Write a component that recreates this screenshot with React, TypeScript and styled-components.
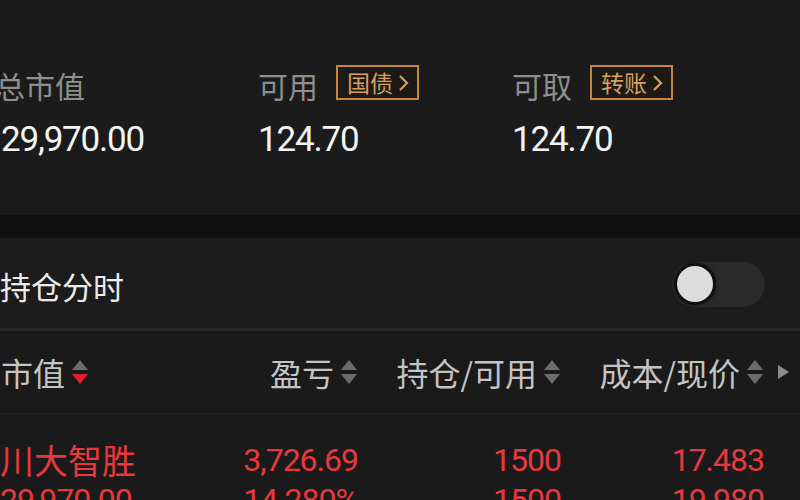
import { FunctionComponent } from 'react';
import styled, { createGlobalStyle } from 'styled-components';

const GlobalStyle = createGlobalStyle`
  html, body {
    margin: 0;
    padding: 0;
    background: #1b1b1b;
  }
  body {
    width: 800px;
    height: 500px;
    overflow: hidden;
    font-family: Roboto, "Noto Sans CJK SC", sans-serif;
  }
`;

const RED = '#e8383d';

type SortState = 'none' | 'desc';

const SortIcon: FunctionComponent<{ state?: SortState }> = ({ state = 'none' }) => (
  <svg width="18" height="28" viewBox="0 0 18 28">
    <polygon points="1,12 9,2 17,12" fill="#6c6c6c" />
    <polygon points="1,16 17,16 9,26" fill={state === 'desc' ? '#e0202a' : '#6c6c6c'} />
  </svg>
);

const Chevron = () => (
  <svg width="11" height="18" viewBox="0 0 11 18">
    <polyline points="2,2 9,9 2,16" fill="none" stroke="#d7a05d" strokeWidth="2.2" strokeLinejoin="miter" />
  </svg>
);

const PlayArrow = () => (
  <svg width="13" height="16" viewBox="0 0 13 16">
    <polygon points="1,1 12,8 1,15" fill="#8a8a8a" />
  </svg>
);

const App: FunctionComponent = () => {
  const summary = [
    { label: '总市值', value: '29,970.00', bleed: true },
    { label: '可用', value: '124.70', action: '国债' },
    { label: '可取', value: '124.70', action: '转账' },
  ];

  const headers = [
    { title: '市值', sort: 'desc' as SortState },
    { title: '盈亏' },
    { title: '持仓/可用' },
    { title: '成本/现价' },
  ];

  const position = {
    lines: [
      ['川大智胜', '3,726.69', '1500', '17.483'],
      ['29,970.00', '14.280%', '1500', '19.980'],
    ],
  };

  return (
    <>
      <GlobalStyle />
      <Page>
        <Summary>
          {summary.map((item) => (
            <SummaryColumn key={item.label}>
              <LabelRow>
                <Label $bleed={item.bleed}>{item.label}</Label>
                {item.action && (
                  <Badge>
                    {item.action}
                    <Chevron />
                  </Badge>
                )}
              </LabelRow>
              <Value>{item.value}</Value>
            </SummaryColumn>
          ))}
        </Summary>

        <Band />

        <ToggleRow>
          <ToggleTitle>持仓分时</ToggleTitle>
          <Track>
            <Knob />
          </Track>
        </ToggleRow>

        <ThickDivider />

        <HeaderRow>
          {headers.map((h, i) => (
            <HeaderCell key={h.title} $align={i === 0 ? 'start' : 'end'}>
              <HeaderText>{h.title}</HeaderText>
              <SortIcon state={h.sort} />
            </HeaderCell>
          ))}
          <ArrowCell>
            <PlayArrow />
          </ArrowCell>
        </HeaderRow>

        <ThinDivider />

        <PositionBlock>
          {position.lines.map((line, li) => (
            <PositionLine key={li}>
              {line.map((cell, ci) => (
                <Cell key={ci} $align={ci === 0 ? 'start' : 'end'} $cjk={li === 0 && ci === 0}>
                  {cell}
                </Cell>
              ))}
              <span />
            </PositionLine>
          ))}
        </PositionBlock>
      </Page>
    </>
  );
};

export default App;

const Page = styled.div`
  width: 800px;
  height: 500px;
  overflow: hidden;
  background: #1b1b1b;
`;

const Summary = styled.div`
  height: 215px;
  box-sizing: border-box;
  padding-top: 65px;
  padding-left: 1px;
  display: grid;
  grid-template-columns: 257px 254px 1fr;
  align-items: start;
`;

const SummaryColumn = styled.div`
  display: flex;
  flex-direction: column;
  gap: 20px;
`;

const LabelRow = styled.div`
  height: 35px;
  display: flex;
  align-items: center;
  gap: 18px;
`;

const Label = styled.span<{ $bleed?: boolean }>`
  font-family: "Noto Sans CJK SC", sans-serif;
  font-size: 30px;
  color: #8e8e8e;
  line-height: 1;
  margin-left: ${(p) => (p.$bleed ? '-6px' : '0')};
  margin-top: 4px;
`;

const Badge = styled.span`
  height: 35px;
  box-sizing: border-box;
  display: inline-flex;
  align-items: center;
  gap: 5px;
  padding: 0 8px 0 9px;
  border: 2px solid #c7843c;
  background: #1d1a16;
  color: #d7a05d;
  font-family: "Noto Sans CJK SC", sans-serif;
  font-size: 23px;
  line-height: 1;
`;

const Value = styled.div`
  font-family: Roboto, sans-serif;
  font-size: 35px;
  letter-spacing: -1.2px;
  line-height: 40px;
  color: #f4f4f4;
`;

const Band = styled.div`
  height: 23px;
  background: #0f1211;
`;

const ToggleRow = styled.div`
  height: 90px;
  display: flex;
  align-items: center;
  justify-content: space-between;
  padding-right: 35px;
  background: #1c1c1c;
`;

const ToggleTitle = styled.span`
  font-family: "Noto Sans CJK SC", sans-serif;
  font-size: 31px;
  color: #ececec;
  margin-top: 5px;
`;

const Track = styled.div`
  width: 93px;
  height: 45px;
  border-radius: 23px;
  background: #2a2a2a;
  display: flex;
  align-items: center;
  margin-top: 2px;
`;

const Knob = styled.div`
  width: 36px;
  height: 36px;
  border-radius: 50%;
  background: #dcdcdc;
  border: 3px solid #101010;
  margin-left: 2px;
  box-shadow: 0 0 3px rgba(0, 0, 0, 0.6);
`;

const ThickDivider = styled.div`
  height: 3px;
  background: #282828;
`;

const columns = '168px 190px 203px 203px 1fr';

const HeaderRow = styled.div`
  height: 82px;
  display: grid;
  grid-template-columns: ${columns};
  align-items: center;
  background: #1a1a1a;
`;

const HeaderCell = styled.div<{ $align: 'start' | 'end' }>`
  display: flex;
  align-items: center;
  justify-content: ${(p) => (p.$align === 'start' ? 'flex-start' : 'flex-end')};
  gap: 6px;
  padding-left: ${(p) => (p.$align === 'start' ? '1px' : '0')};
`;

const HeaderText = styled.span`
  font-family: "Noto Sans CJK SC", sans-serif;
  font-size: 32px;
  color: #c4c4c4;
  line-height: 1;
`;

const ArrowCell = styled.div`
  display: flex;
  align-items: center;
  padding-left: 13px;
`;

const ThinDivider = styled.div`
  height: 1px;
  background: #232323;
`;

const PositionBlock = styled.div`
  padding-top: 26px;
  background: #1a1a1a;
`;

const PositionLine = styled.div`
  display: grid;
  grid-template-columns: ${columns};
  height: 40px;
  align-items: center;
`;

const Cell = styled.div<{ $align: 'start' | 'end'; $cjk?: boolean }>`
  text-align: ${(p) => (p.$align === 'start' ? 'left' : 'right')};
  font-family: ${(p) => (p.$cjk ? '"Noto Sans CJK SC", sans-serif' : 'Roboto, sans-serif')};
  font-size: ${(p) => (p.$cjk ? '34px' : '32px')};
  letter-spacing: ${(p) => (p.$cjk ? '0' : '-1px')};
  line-height: 40px;
  color: ${RED};
  white-space: nowrap;
`;
